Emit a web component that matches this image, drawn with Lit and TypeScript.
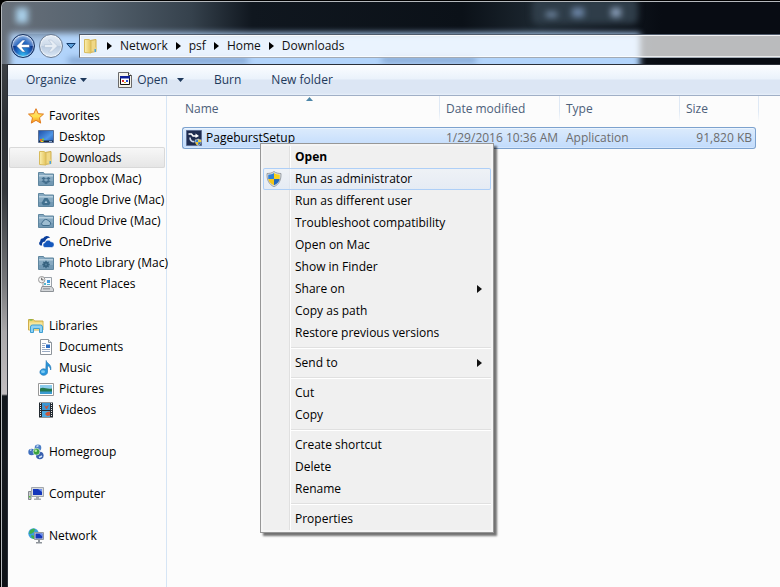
import { LitElement, html, css, svg, nothing, type TemplateResult } from "lit";
import { customElement } from "lit/decorators.js";
import { classMap } from "lit/directives/class-map.js";

const glyph = (body: TemplateResult, size = 16) =>
  html`<svg class="icon" width=${size} height=${size} viewBox="0 0 16 16" aria-hidden="true">${body}</svg>`;

const macFolder = (mark: TemplateResult) => svg`
  <path d="M0.500 1.500h5l1 1.500h9v11.500h-15z" fill="#86a9c1" stroke="#5f869f"/>
  <path d="M1 4h14v1.500h-14z" fill="#b9d0df"/>
  <path d="M1 10h14v4h-14z" fill="#7299b4"/>${mark}`;

const shield = svg`
  <path d="M8 0.500C10 2 12.500 2.500 15 2.500C15.300 9 13 13.500 8 15.700C3 13.500 0.700 9 1 2.500C3.500 2.500 6 2 8 0.500z" fill="#d9dde0" stroke="#8a8f94" stroke-width="0.800"/>
  <path d="M8 2V8H2.300C2.200 6.500 2.200 5 2.300 3.700C4.500 3.700 6.500 3 8 2z" fill="#2f7fd6"/>
  <path d="M8 2V8H13.700C13.800 6.500 13.800 5 13.700 3.700C11.500 3.700 9.500 3 8 2z" fill="#f8d21c"/>
  <path d="M2.300 8H8V14.300C4.500 12.700 2.800 10.800 2.300 8z" fill="#f3c517"/>
  <path d="M13.700 8H8V14.300C11.500 12.700 13.200 10.800 13.700 8z" fill="#2268bd"/>`;

const icons: Record<string, TemplateResult> = {
  star: svg`<defs><linearGradient id="st" x2="0" y2="1"><stop offset="0" stop-color="#ffd98a"/><stop offset=".55" stop-color="#ffe04a"/><stop offset="1" stop-color="#f58a1c"/></linearGradient></defs>
    <path d="M8 0.700L10.200 5.700L15.500 6.100L11.500 9.700L12.700 15.100L8 12.300L3.300 15.100L4.500 9.700L0.500 6.100L5.800 5.700z" fill="url(#st)" stroke="#e07a1c"/>`,
  desktop: svg`<defs><linearGradient id="dk" x2="1" y2="1"><stop offset="0" stop-color="#1d4fa8"/><stop offset=".6" stop-color="#4f96e6"/><stop offset="1" stop-color="#1c53b0"/></linearGradient></defs>
    <path d="M0.500 1.500h15v12h-15z" fill="url(#dk)" stroke="#5b6f93"/><path d="M1 11.500h14v1.500h-14z" fill="#1b2638"/>
    <path d="M2 10h2v2H2z" fill="#e8632c"/><path d="M4 9.500h2v2H4z" fill="#7cc33e"/><path d="M2.500 12h3v1h-3z" fill="#f3cf2a"/><path d="M11 12h3v1h-3z" fill="#8aa6cc"/>`,
  folder: svg`<defs><linearGradient id="fd" x2="1" y2="0"><stop offset="0" stop-color="#fbf0b0"/><stop offset="1" stop-color="#e3c25a"/></linearGradient></defs>
    <path d="M7 2.500L13 1.500V13.500L7 14.500z" fill="#f0d886" stroke="#cfae4d"/>
    <path d="M1.500 1.500h4.500l2 1.500v12l-6.500-.5z" fill="url(#fd)" stroke="#d8bb5c"/>
    <path d="M10.500 9.500h3v4.500h-3z" fill="#ead489"/><path d="M11.500 11h1.500v3h-1.500z" fill="#4ba2dc"/>`,
  dropbox: macFolder(svg`<path d="M5.500 6L8 7.500L5.500 9L3.500 7.500z M10.500 6L12.500 7.500L10.500 9L8 7.500z M3.500 10.300L5.500 9L8 10.500L10.500 9L12.500 10.300L10.500 11.500L8 10.500L5.500 11.500z M5.500 11.800L8 10.800L10.500 11.800L8 13.300z" fill="#416c8b"/>`),
  gdrive: macFolder(svg`<path d="M6.500 6h3l3 5l-1.500 2.300h-6l-1.500-2.300z" fill="#41708f"/><path d="M8 8.500l1.500 2.500h-3z" fill="#a8c5d8"/>`),
  icloud: macFolder(svg`<path d="M5 12.500a2 2 0 0 1 0-3.800a3 3 0 0 1 5.600-.6a2.300 2.300 0 0 1 .6 4.400z" fill="#9dbdd1" stroke="#416c8b"/>`),
  onedrive: svg`<path d="M2.500 11.500a2.500 2.500 0 0 1-.3-4.300a3 3 0 0 1 3-3a4 4 0 0 1 7-.4c-3-.2-4.700 1.700-5 3.600c-2.500 0-3.700 2-3 4.100z" fill="#0a3f9c"/>
    <path d="M6.800 13.500a2.500 2.500 0 0 1 .2-4.900a3.200 3.200 0 0 1 5.900-.9a2.900 2.900 0 0 1 .8 5.800z" fill="#1558bd" stroke="#fff" stroke-width=".6"/>`,
  photo: macFolder(svg`<circle cx="8" cy="9.500" r="2.700" fill="#36627f"/><path d="M8 5.800v7.400M4.300 9.500h7.400M5.400 6.900l5.200 5.200M10.600 6.900l-5.200 5.200" stroke="#36627f" stroke-width="1.300"/><circle cx="8" cy="9.500" r="0.900" fill="#5d87a4"/>`),
  recent: svg`<path d="M5 1.500h8.500v9h-8.500z" fill="#f6f8fa" stroke="#9aa1a8"/><path d="M9 4h3v3h-3z" fill="#3d9ae0"/><path d="M6 7h2v2h-2zM9 8h3v1h-3z" fill="#54b3cf"/>
    <path d="M2.500 15.500l1.500-5h9.500l2 2.500v2.500z" fill="#d3d6d9" stroke="#8c9196"/><path d="M5 12h7v1.500h-7z" fill="#9ba1a6"/>
    <circle cx="3.700" cy="3.700" r="3.200" fill="#f4f4f4" stroke="#9a9a9a"/><path d="M3.700 1.700v2.200h1.800" stroke="#555" fill="none"/>`,
  libraries: svg`<path d="M0.500 3V1.500h5l1 1.500h8.500v9h-14.500z" fill="#f0d777" stroke="#cfae4a"/><path d="M1.500 2h3" stroke="#5ab43c"/>
    <path d="M1 4.500h13.500v7h-13.500z" fill="#f7e69c"/><path d="M2.500 14.500V9a2 2 0 0 1 2-2h8a2 2 0 0 1 2 2v5.500h-3v-4h-6v4z" fill="#8fd2f4" stroke="#3e9fd2"/>`,
  document: svg`<path d="M2.500 0.500h8l3 3v12h-11z" fill="#fff" stroke="#8d949b"/><path d="M10.500 0.500v3h3" fill="#e3e6e9" stroke="#8d949b"/>
    <path d="M4 4.500h4M4 6.500h3M4 8.500h3M4 10.500h8M4 12.500h8" stroke="#9aabc4"/><path d="M8 5.500h4v3.500h-4z" fill="#2b6cc4"/>`,
  music: svg`<path d="M8.200 0.500c.3 3 5.800 3.500 4.500 9.500c-.3-2.700-1.500-3.700-3.200-4.200v6.200a3.800 3.300 0 1 1-1.700-2.700z" fill="#2a97dc" stroke="#1a6fb0" stroke-width=".6"/><ellipse cx="5" cy="11.700" rx="2" ry="1.400" fill="#7ccaf3"/>`,
  pictures: svg`<path d="M0.500 2.500h15v12h-15z" fill="#fff" stroke="#989898"/><path d="M2 4h12v4.500h-12z" fill="#8ccbed"/><path d="M2 7.500c4-2 6 1 12 0v3.500h-12z" fill="#23784f"/><path d="M2 10.500h12v2.500h-12z" fill="#3a9bd0"/>`,
  videos: svg`<path d="M1 0.500h14v15h-14z" fill="#232a31"/><path d="M4 1h8v7h-8z" fill="#3c97d4"/><path d="M4 9h8v6h-8z" fill="#4aa8df"/><path d="M6 3l2 1.500l3-1.500l-2 4h-1zM9 10l3-.5v4l-3 .5l-2-2z" fill="#c9573a"/>
    <path d="M2.500 1v14M13.500 1v14" stroke="#e8e8e8" stroke-dasharray="1 1"/>`,
  homegroup: svg`<circle cx="10" cy="3.700" r="3.300" fill="#4c7fc6"/><circle cx="3.600" cy="8" r="3.300" fill="#3e6ebd"/><circle cx="11.800" cy="11.500" r="3.800" fill="#385fae"/>
    <circle cx="8.500" cy="7.700" r="3.400" fill="#3aa33d" stroke="#d8e8f5" stroke-width=".7"/><circle cx="7.800" cy="6.700" r="1.300" fill="#b5e8a2"/><path d="M8.500 2.500l2-.8M2 6.500l1.500-.8M11 13.500l3-1.500" stroke="#cfe2f7" stroke-width="1.400"/>`,
  computer: svg`<path d="M0.500 5.500h2.500v8h-2.500z" fill="#c9cdd0" stroke="#84898e"/><path d="M1 10h1.500v1.500h-1.500z" fill="#53c238"/><path d="M3.500 1.500h12v9h-12z" fill="#d7dade" stroke="#a2a7ac"/>
    <path d="M5 3h9v6h-9z" fill="#1436bb"/><path d="M10 3h4v3z" fill="#6f92ee"/><path d="M8 11h3v1.500h2v1.500h-7v-1.500h2z" fill="#a7abb0"/>`,
  network: svg`<circle cx="5.500" cy="5.500" r="5.200" fill="#3a9de0"/><path d="M2 2.500c2-2 4-2 5-1.500l-1 3l-3 2l-2-.5zM3.500 7l3 1v3c-2 0-4-2-3-4z" fill="#3fb24b"/>
    <path d="M6.500 4.500h9v7h-9z" fill="#d7dade" stroke="#9499a0"/><path d="M7.500 5.500h7v5h-7z" fill="#1436bb"/><path d="M11 5.500h3.500v3z" fill="#6f92ee"/><path d="M10 12h2v2h2v1.500h-6v-1.500h2z" fill="#8e949a"/>`,
  setup: svg`<path d="M0.500 0.500h15v15h-15z" fill="#1e2c50" stroke="#5d6d90"/><path d="M2.500 4h3l1.500 2h4" stroke="#fff" stroke-width="1.600" fill="none"/><path d="M9.500 3.500l3.500 2.500l-3.500 2z" fill="#fff"/><path d="M4 7.500c0 3 2 4.500 4.500 4" stroke="#cfd7e8" stroke-width="1.600" fill="none"/>
    <g transform="translate(8.500 8.500) scale(.47)">${shield}</g>`,
  program: svg`<path d="M1.500 0.500h10l3 3v12h-13z" fill="#f4f2ea" stroke="#6a6a6a"/><path d="M11.500 0.500v3h3" fill="#fff" stroke="#3c3c3c"/>
    <path d="M3.500 4.500h9v8h-9z" fill="#fff" stroke="#111"/><path d="M3 4h10v2.500h-10z" fill="#10239a"/><path d="M5 8h2v2h-2z" fill="#d33"/><path d="M9 8h2v2h-2z" fill="#2a4fd0"/><path d="M7 10h2v1h-2z" fill="#e0b020"/>`,
};

const sideGroups = [
  { name: "Favorites", icon: "star", items: [
    ["Desktop", "desktop"], ["Downloads", "folder"], ["Dropbox (Mac)", "dropbox"], ["Google Drive (Mac)", "gdrive"],
    ["iCloud Drive (Mac)", "icloud"], ["OneDrive", "onedrive"], ["Photo Library (Mac)", "photo"], ["Recent Places", "recent"]] },
  { name: "Libraries", icon: "libraries", items: [
    ["Documents", "document"], ["Music", "music"], ["Pictures", "pictures"], ["Videos", "videos"]] },
  { name: "Homegroup", icon: "homegroup", items: [] },
  { name: "Computer", icon: "computer", items: [] },
  { name: "Network", icon: "network", items: [] },
];

const menuGroups = [
  ["Open", "Run as administrator", "Run as different user", "Troubleshoot compatibility", "Open on Mac",
    "Show in Finder", "Share on", "Copy as path", "Restore previous versions"],
  ["Send to"],
  ["Cut", "Copy"],
  ["Create shortcut", "Delete", "Rename"],
  ["Properties"],
];

const resets = css`
  * { box-sizing: border-box; }
  button {
    margin: 0; padding: 0; border: 0; background: none;
    font: inherit; color: inherit; text-align: left; white-space: nowrap;
  }
  a { color: inherit; text-decoration: none; white-space: nowrap; }
  .icon { flex: none; display: block; }
`;

@customElement("window-header")
class WindowHeader extends LitElement {
  static styles = [resets, css`
    :host {
      display: block; position: relative; overflow: hidden; height: 62px; padding-top: 32px;
      border-top-left-radius: 5px;
      background: linear-gradient(90deg, #68707a 0, #56636f 90px, #35414c 190px, #10171f 250px, #0b1118 460px, #1d2831 540px, #080c13 660px);
    }
    .glow { position: absolute; filter: blur(3px); }
    .page { left: 8px; top: 31px; width: 630px; height: 44px; background: #b2d4fb; }
    .caption { left: 530px; top: -4px; width: 106px; height: 26px; border-radius: 6px; background: #2f3d49; }
    .app { left: 14px; top: 6px; width: 12px; height: 15px; background: #a9d0ea; }
    .min { left: 544px; top: 10px; width: 11px; height: 5px; background: #7b93b0; }
    .max { left: 570px; top: 6px; width: 12px; height: 9px; background: #6d87a8; }
    .close { left: 609px; top: 6px; width: 10px; height: 9px; background: #8ca0bb; }
    .words { left: 66px; top: 56px; width: 180px; height: 5px; background: #7598c6; }
    .hint { left: 380px; top: 56px; width: 94px; height: 4px; background: #6c8fbd; }
    .bar { position: relative; display: flex; align-items: center; height: 24px; padding-left: 9px; }
    .arrows {
      display: flex; gap: 4px; height: 24px; border-radius: 12px;
      background: linear-gradient(rgba(110, 135, 165, .5), rgba(255, 255, 255, .1) 60%);
    }
    .round {
      width: 24px; height: 24px; border-radius: 12px; display: grid; place-items: center;
      border: 1px solid #17315f;
      background: radial-gradient(ellipse at 50% 105%, #35c4f5 0, #1b63c0 45%, transparent 70%), linear-gradient(#9fbde6, #4a78c4 48%, #0a2f83 52%, #0d3f9c);
      box-shadow: inset 0 0 1px 1px rgba(255, 255, 255, .6);
    }
    .next {
      border-color: #6b7c93;
      background: linear-gradient(#e4edf7, #ccd9e8 48%, #b9cadf 52%, #dbe8f6);
    }
    .recent { display: grid; place-items: center; width: 14px; height: 24px; margin: 0 1px; }
    .address {
      flex: 1; display: flex; align-items: center; height: 24px; padding-left: 3px;
      color: #111; background: rgba(255, 255, 255, .72);
      border: 1px solid #505b6b; border-bottom-color: #a2aab5; border-right: 0;
      box-shadow: inset 1px 1px rgba(255, 255, 255, .8), inset 0 -1px rgba(255, 255, 255, .7);
    }
    .sep { flex: none; margin: 0 8px; }
  `];
  render() {
    return html`
      ${["page", "caption", "app", "min", "max", "close", "words", "hint"].map((n) => html`<span class="glow ${n}"></span>`)}
      <div class="bar">
        <div class="arrows">
          <button class="round" aria-label="Back"><svg width="16" height="14" viewBox="0 0 16 14"><path d="M7.500 1L1.500 7l6 6h3L7 8.500h7.500v-3H7L10.500 1z" fill="#fff" stroke="#2a4f93" stroke-width=".5"/></svg></button>
          <button class="round next" aria-label="Forward"><svg width="16" height="14" viewBox="0 0 16 14"><path d="M8.500 1l6 6l-6 6h-3L9 8.500H1.500v-3H9L5.500 1z" fill="#e6edf5" stroke="#b4c4d6" stroke-width=".6"/></svg></button>
        </div>
        <button class="recent" aria-label="Recent pages"><svg width="10" height="6" viewBox="0 0 10 6"><path d="M.8.500h8.400L5 5.300z" fill="#5ba0dc" stroke="#123a6b"/></svg></button>
        <div class="address">
          ${glyph(icons.folder)}
          ${["Network", "psf", "Home", "Downloads"].map((c) => html`
            <svg class="sep" width="5" height="8" viewBox="0 0 5 8" aria-hidden="true"><path d="M0 0l5 4l-5 4z" fill="#000"/></svg>
            <button>${c}</button>`)}
        </div>
      </div>`;
  }
}

@customElement("side-pane")
class SidePane extends LitElement {
  static styles = [resets, css`
    :host { display: block; padding-top: 9px; border-right: 1px solid #d6e5f5; }
    .group { margin-bottom: 21px; }
    a { display: flex; align-items: center; gap: 5px; height: 21px; margin: 0 1px; padding-left: 19px; }
    .child { padding-left: 29px; }
    .current {
      background: linear-gradient(#f8f8f8, #e5e5e5); border-radius: 2px;
      box-shadow: inset 0 0 0 1px #d9d9d9;
    }
  `];
  render() {
    return html`<nav aria-label="Places">${sideGroups.map((g) => html`
      <div class="group">
        <a href="#">${glyph(icons[g.icon])}${g.name}</a>
        ${g.items.map(([name, icon]) => html`
          <a href="#" class=${classMap({ child: true, current: name === "Downloads" })}>${glyph(icons[icon])}${name}</a>`)}
      </div>`)}</nav>`;
  }
}

@customElement("context-menu")
class ContextMenu extends LitElement {
  static styles = [resets, css`
    :host {
      display: block; padding: 2px; border: 1px solid #979797;
      background: linear-gradient(90deg, transparent 26px, #e0e0e0 26px, #e0e0e0 27px, #fff 27px, #fff 28px, transparent 28px) content-box, #f0f0f0;
      box-shadow: inset 0 0 0 2px #f5f5f5, 3px 3px 2px rgba(0, 0, 0, .55);
    }
    button {
      display: grid; grid-template-columns: 22px 1fr 5px; align-items: center; column-gap: 9px;
      width: 100%; height: 22px; padding: 0 9px 0 1px; border-radius: 2px;
    }
    .icon { justify-self: end; margin-right: 4px; }
    .text { grid-column: 2; }
    .default { font-weight: 700; }
    .hot {
      background: linear-gradient(rgba(238, 243, 250, .6), rgba(220, 231, 247, .55));
      box-shadow: inset 0 0 0 1px #aecff7;
    }
    hr { height: 2px; margin: 3px 0 3px 28px; border: 0; border-top: 1px solid #e0e0e0; background: #fff; }
  `];
  render() {
    return html`<div role="menu">${menuGroups.map((group, i) => html`
      ${i ? html`<hr />` : nothing}
      ${group.map((label) => html`
        <button role="menuitem" class=${classMap({ hot: label === "Run as administrator", default: label === "Open" })}>
          ${label === "Run as administrator" ? glyph(shield) : nothing}
          <span class="text">${label}</span>
          ${label === "Share on" || label === "Send to" ? html`<svg width="5" height="8" viewBox="0 0 5 8" aria-hidden="true"><path d="M0 0l5 4l-5 4z" fill="#111"/></svg>` : nothing}
        </button>`)}`)}</div>`;
  }
}

@customElement("app-root")
class AppRoot extends LitElement {
  static styles = [resets, css`
    :host {
      display: flex; position: relative; min-height: 100vh; overflow: hidden; padding: 1px 0 0 1px; background: #000;
      font: 12px/16px "Open Sans", "Noto Sans", sans-serif; color: #000;
    }
    .window {
      flex: 1; min-width: 0; display: flex; flex-direction: column;
      border: solid #b4b8bc; border-width: 1px 0 0 1px; border-top-left-radius: 6px;
      background: linear-gradient(#4c5157, #2d3034 120px, #34373b 190px, #77787b 280px, #aaa8aa 330px, #c2bec0 392px, #11161b 394px, #171b20 460px, #0d1116);
    }
    .client {
      flex: 1; display: flex; flex-direction: column; margin-left: 5px;
      border: solid #2a2f38; border-width: 1px 0 0 1px; background: #fcfcfc;
    }
    .tools {
      display: flex; align-items: center; gap: 30px; height: 31px; padding-left: 18px; color: #1e395b;
      background: linear-gradient(#fbfdff, #eaf2fb 14px, #dce6f4 15px, #dce6f4 28px, #e8f0fa);
      border-bottom: 1px solid #a0afc6;
    }
    .tools button { display: flex; align-items: center; gap: 4px; }
    .tools .split { gap: 9px; }
    .tools .label { display: flex; align-items: center; gap: 4px; }
    .body { flex: 1; display: grid; grid-template-columns: 159px minmax(0, 1fr); }
    table { border-spacing: 0; table-layout: fixed; width: 577px; margin-left: 15px; }
    .name { width: 258px; }
    .mid { width: 120px; }
    .size { width: 79px; }
    th { padding: 0 0 6px; font-weight: 400; text-align: left; color: #4c607a; }
    td { padding: 0; color: #6d6d6d; }
    .head {
      display: block; height: 25px; line-height: 25px; padding-left: 6px; position: relative;
      border-right: 1px solid; border-image: linear-gradient(#dfe9f5, #dfe9f5 60%, #fcfcfc) 1;
    }
    .name .head { padding-left: 3px; }
    .sort { position: absolute; left: 124px; top: 1px; }
    .cell {
      display: flex; align-items: center; gap: 4px; height: 22px; padding-left: 6px; white-space: nowrap;
      border: solid #7da2ce; border-width: 1px 0;
      background: linear-gradient(#dcebfc, #c1dbfc);
      box-shadow: inset 0 1px #ebf4fe, inset 0 -1px #d3e5fc;
    }
    .file { padding-left: 3px; border-left-width: 1px; border-radius: 3px 0 0 3px; color: #000; }
    .amount { justify-content: flex-end; margin-right: 3px; padding: 0 3px 0 0; border-right-width: 1px; border-radius: 0 3px 3px 0; }
    context-menu { position: absolute; left: 260px; top: 143px; width: 234px; }
  `];
  render() {
    const down = html`<svg width="7" height="4" viewBox="0 0 7 4" aria-hidden="true"><path d="M0 0h7L3.500 4z" fill="#1e395b"/></svg>`;
    return html`
      <div class="window">
        <window-header></window-header>
        <div class="client">
          <div class="tools">
            <button>Organize${down}</button>
            <button class="split"><span class="label">${glyph(icons.program)}Open</span>${down}</button>
            <button>Burn</button>
            <button>New folder</button>
          </div>
          <div class="body">
            <side-pane></side-pane>
            <main>
              <table>
                <thead><tr>
                  <th class="name"><span class="head">Name<svg class="sort" width="7" height="4" viewBox="0 0 7 4" aria-hidden="true"><path d="M0 4L3.500 0L7 4z" fill="#4d86a8"/></svg></span></th>
                  <th class="mid"><span class="head">Date modified</span></th>
                  <th class="mid"><span class="head">Type</span></th>
                  <th class="size"><span class="head">Size</span></th>
                </tr></thead>
                <tbody><tr>
                  <td><div class="cell file">${glyph(icons.setup)}PageburstSetup</div></td>
                  <td><div class="cell">1/29/2016 10:36 AM</div></td>
                  <td><div class="cell">Application</div></td>
                  <td><div class="cell amount">91,820 KB</div></td>
                </tr></tbody>
              </table>
            </main>
          </div>
        </div>
      </div>
      <context-menu></context-menu>`;
  }
}
